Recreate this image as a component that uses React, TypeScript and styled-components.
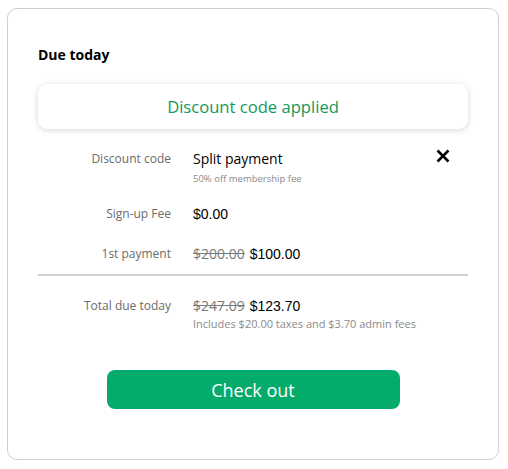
import React from "react";
import styled, { createGlobalStyle } from "styled-components";

const Global = createGlobalStyle`
  html, body { margin: 0; padding: 0; background: #fff; }
  body { font-family: "Open Sans", sans-serif; color: #000; }
`;

const Page = styled.div`
  padding: 8px 9px 7px 7px;
`;

const Card = styled.div`
  border: 1px solid #cfcfcf;
  border-radius: 10px;
  height: 452px;
  box-sizing: border-box;
  padding: 37px 30px 0 30px;
  display: flex;
  flex-direction: column;
`;

const Title = styled.div`
  font-weight: 700;
  font-size: 14px;
  line-height: 18px;
`;

const Banner = styled.div`
  margin-top: 20px;
  height: 45px;
  border-radius: 9px;
  box-shadow: 0 1px 6px rgba(0, 0, 0, 0.16);
  display: flex;
  align-items: center;
  justify-content: center;
  color: #13995b;
  font-size: 16.6px;
`;

const Rows = styled.div`
  margin-top: 20px;
  display: grid;
  grid-template-columns: 133px 1fr;
  column-gap: 22px;
  position: relative;
`;

const Label = styled.div`
  text-align: right;
  font-size: 12px;
  color: #6b6b6b;
  line-height: 18px;
  padding-top: 1px;
`;

const Value = styled.div<{ $mb: number }>`
  display: flex;
  flex-direction: column;
  margin-bottom: ${(p) => p.$mb}px;
`;

const Main = styled.div`
  font-size: 14px;
  line-height: 20px;
  display: flex;
  align-items: baseline;
  gap: 5px;
`;

const Price = styled.span`
  font-family: "Liberation Sans", Arial, sans-serif;
  font-size: 14px;
  color: #000;
`;

const Old = styled.span`
  font-size: 14px;
  color: #7a7a7a;
  text-decoration: line-through;
`;

const Sub = styled.div<{ $size: number; $gap: number }>`
  font-size: ${(p) => p.$size}px;
  color: #8a8a8a;
  line-height: 14px;
  margin-top: ${(p) => p.$gap}px;
`;

const Close = styled.button`
  position: absolute;
  right: 18px;
  top: 0;
  background: none;
  border: none;
  padding: 0;
  width: 14px;
  height: 14px;
  cursor: pointer;
  display: flex;
`;

const Divider = styled.div`
  height: 2px;
  background: #cfcfcf;
  margin-bottom: 20px;
`;

const Button = styled.button`
  align-self: center;
  margin-top: 39px;
  width: 293px;
  height: 39px;
  border: none;
  border-radius: 8px;
  background: #05ab6b;
  color: #fff;
  font-family: "Open Sans", sans-serif;
  font-size: 18px;
  cursor: pointer;
`;

export default function App() {
  return (
    <Page>
      <Global />
      <Card>
        <Title>Due today</Title>
        <Banner>Discount code applied</Banner>
        <Rows>
          <Label>Discount code</Label>
          <Value $mb={18}>
            <Main>Split payment</Main>
            <Sub $size={9.5} $gap={3}>50% off membership fee</Sub>
          </Value>
          <Label>Sign-up Fee</Label>
          <Value $mb={20}>
            <Main>
              <Price>$0.00</Price>
            </Main>
          </Value>
          <Label>1st payment</Label>
          <Value $mb={10}>
            <Main>
              <Old>$200.00</Old>
              <Price>$100.00</Price>
            </Main>
          </Value>
          <Close aria-label="Remove discount">
            <svg width="14" height="14" viewBox="0 0 14 14">
              <path d="M1.5 1.5 L12.5 12.5 M12.5 1.5 L1.5 12.5" stroke="#000" strokeWidth="2.5" />
            </svg>
          </Close>
        </Rows>
        <Divider />
        <Rows style={{ marginTop: 0 }}>
          <Label>Total due today</Label>
          <Value $mb={0}>
            <Main>
              <Old>$247.09</Old>
              <Price>$123.70</Price>
            </Main>
            <Sub $size={11} $gap={1}>Includes $20.00 taxes and $3.70 admin fees</Sub>
          </Value>
        </Rows>
        <Button>Check out</Button>
      </Card>
    </Page>
  );
}
